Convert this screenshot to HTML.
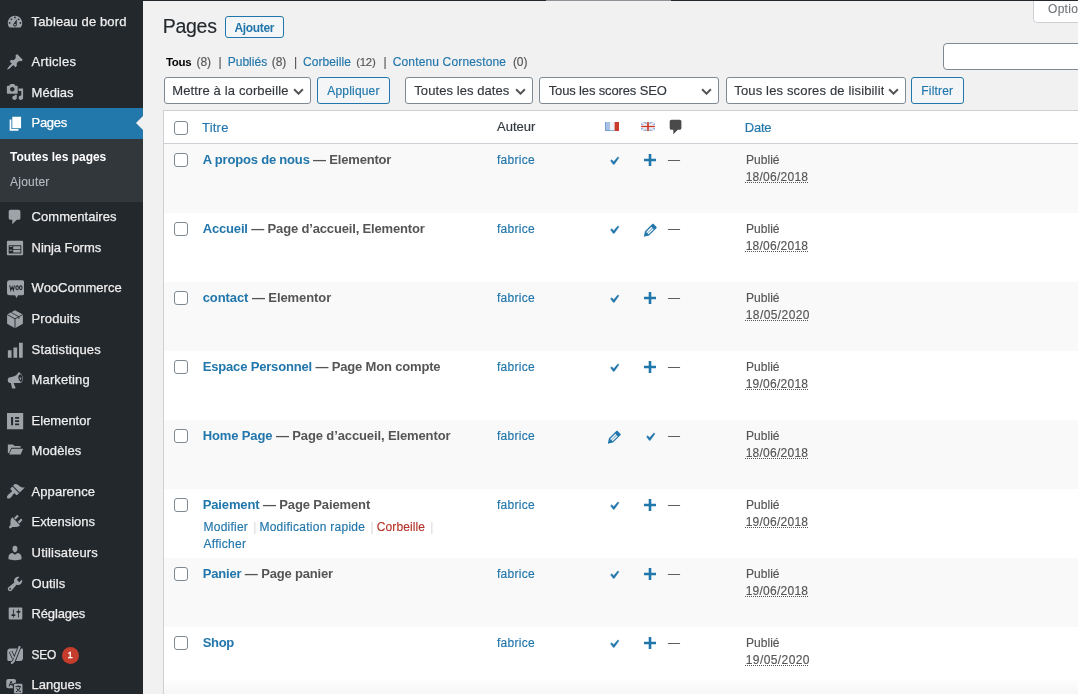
<!DOCTYPE html>
<html lang="fr">
<head>
<meta charset="utf-8">
<title>Pages</title>
<style>
*{box-sizing:border-box;margin:0;padding:0}
html,body{width:1078px;height:694px;overflow:hidden}
body{background:#f1f1f1;font-family:"Liberation Sans",Arial,sans-serif;font-size:12px;color:#444;position:relative}
a{text-decoration:none;color:#2176ab}
i{font-style:normal}
#wrap{position:absolute;left:0;top:0;width:1078px;height:694px;overflow:hidden;will-change:transform}
#topbar{position:absolute;left:0;top:0;width:1078px;height:1px;background:#23282d;z-index:5}
#topbar i{position:absolute;left:546px;top:0;width:125px;height:1px;background:#8f9397}
#fade{position:absolute;left:164px;top:678px;width:914px;height:16px;background:linear-gradient(rgba(0,0,0,0),rgba(0,0,0,.035))}
#side{position:absolute;left:0;top:0;width:143px;height:694px;background:#23282d}
#cur{position:absolute;left:0;top:108px;width:143px;height:31px;background:#2277ab}
#cur:after{content:"";position:absolute;right:0;top:8px;border:7.5px solid transparent;border-right-color:#f1f1f1;border-left-width:0}
#sub{position:absolute;left:0;top:139px;width:143px;height:63px;background:#32373c}
.t{position:absolute;white-space:nowrap;-webkit-text-stroke:.15px}
.m{color:#eee;font-size:13px;-webkit-text-stroke:.25px}
.mic{position:absolute;fill:#9ea3a8}
.badge{position:absolute;left:62px;top:647px;width:16.500px;height:16.500px;border-radius:9px;background:#c63d2d;color:#fff;font-size:9.500px;line-height:16px;text-align:center;-webkit-text-stroke:.3px}
.btn{position:absolute;border:1px solid #2176ab;border-radius:3px;background:#f3f5f6}
.sel{position:absolute;border:1px solid #7e8993;border-radius:3px;background:#fff;height:27px;top:77px}
.sel svg{position:absolute;right:6.500px;top:9.500px;width:11px;height:7.700px}
#tbl{position:absolute;left:163px;top:110px;width:930px;height:600px;background:#fff;border:1px solid #ccd0d4}
#thead{position:absolute;left:164px;top:143px;width:920px;height:1px;background:#ccd0d4}
.row{position:absolute;left:164px;width:920px;background:#f9f9f9}
.cb{position:absolute;left:174px;width:14px;height:14px;border:1px solid #7e8993;border-radius:3px;background:#fff}
.b{font-weight:700;-webkit-text-stroke:0}
.g{color:#555}
.ic{position:absolute;fill:#2176ab}
.dt{text-decoration:underline dotted #555;text-decoration-thickness:1px;text-underline-offset:.5px}
#opt{position:absolute;left:1033px;top:-4px;width:120px;height:27px;border:1px solid #ccd0d4;border-radius:0 0 4px 4px;background:#fff}
#search{position:absolute;left:943px;top:43px;width:200px;height:27px;border:1px solid #7e8993;border-radius:4px;background:#fff}
</style>
</head>
<body>

<div id="wrap">
<div id="side"><div id="cur"></div><div id="sub"></div></div>
<div id="topbar"><i></i></div>
<svg class="mic" style="left:6.2px;top:13.1px;width:18.0px;height:18.0px" viewBox="0 0 20 20"><path d="M3.76 16h12.48c1.1-1.37 1.76-3.11 1.76-5 0-4.42-3.58-8-8-8s-8 3.58-8 8c0 1.89.66 3.63 1.76 5zM10 4c.55 0 1 .45 1 1s-.45 1-1 1-1-.45-1-1 .45-1 1-1zM6 6c.55 0 1 .45 1 1s-.45 1-1 1-1-.45-1-1 .45-1 1-1zm8 0c.55 0 1 .45 1 1s-.45 1-1 1-1-.45-1-1 .45-1 1-1zm-5.37 5.55L12 7v6c0 1.1-.9 2-2 2s-2-.9-2-2c0-.57.24-1.08.63-1.45zM4 10c.55 0 1 .45 1 1s-.45 1-1 1-1-.45-1-1 .45-1 1-1zm12 0c.55 0 1 .45 1 1s-.45 1-1 1-1-.45-1-1 .45-1 1-1zm-5 3c0-.55-.45-1-1-1s-1 .45-1 1 .45 1 1 1 1-.45 1-1z"/></svg>
<span class="t m" style="left:31.6px;top:13.3px;font-size:13px;line-height:17px;letter-spacing:0.11px">Tableau de bord</span>
<svg class="mic" style="left:6px;top:53px;width:18.0px;height:18.0px" viewBox="0 0 20 20"><path d="M10.44 3.02l1.82-1.82 6.36 6.35-1.83 1.820c-1.050-.68-2.480-.57-3.410.36l-.75.75c-.92.93-1.040 2.350-.35 3.410l-1.830 1.820-2.410-2.410-2.800 2.790c-.42.42-3.380 2.710-3.800 2.290s1.860-3.390 2.280-3.810l2.790-2.790L4.100 9.360l1.830-1.820c1.050.69 2.480.57 3.400-.36l.75-.75c.93-.92 1.050-2.350.36-3.410z"/></svg>
<span class="t m" style="left:31.6px;top:52.8px;font-size:13px;line-height:17px;letter-spacing:0.25px">Articles</span>
<svg class="mic" style="left:6px;top:83px;width:18.0px;height:18.0px" viewBox="0 0 20 20"><path d="M13 11V4c0-.55-.45-1-1-1h-1.670L9 1H5L3.670 3H2c-.55 0-1 .45-1 1v7c0 .55.45 1 1 1h10c.55 0 1-.45 1-1zM7 4.500c1.380 0 2.500 1.120 2.500 2.500S8.380 9.500 7 9.500 4.500 8.380 4.500 7 5.620 4.500 7 4.500zM14 6h5v10.500c0 1.380-1.120 2.500-2.500 2.500S14 17.880 14 16.500s1.120-2.500 2.500-2.500c.17 0 .34.020.5.050V9h-3V6zm-4 8.050V13h2v3.500c0 1.380-1.120 2.500-2.500 2.500S7 17.880 7 16.500 8.120 14 9.500 14c.17 0 .34.020.5.050z"/></svg>
<span class="t m" style="left:31.6px;top:84.0px;font-size:13px;line-height:17px">Médias</span>
<svg class="mic" style="left:6.8px;top:114.8px;width:17.6px;height:17.6px;fill:#fff" viewBox="0 0 20 20"><path d="M6 15V2h10v13H6zm-1 1h8v2H3V5h2v11z"/></svg>
<span class="t m" style="left:31.6px;top:113.7px;font-size:13px;line-height:17px;letter-spacing:-0.31px;color:#fff">Pages</span>
<svg class="mic" style="left:5.8px;top:207.5px;width:18.0px;height:18.0px" viewBox="0 0 20 20"><path d="M5 2h9c1.100 0 2 .9 2 2v7c0 1.100-.9 2-2 2h-2l-5 5v-5H5c-1.100 0-2-.9-2-2V4c0-1.100.9-2 2-2z"/></svg>
<span class="t m" style="left:31.6px;top:208.0px;font-size:13px;line-height:17px;letter-spacing:0.03px">Commentaires</span>
<svg class="mic" style="left:6px;top:238.8px;width:18.0px;height:18.0px" viewBox="0 0 20 20"><path d="M2 2h16c.55 0 1 .45 1 1v14c0 .55-.45 1-1 1H2c-.55 0-1-.45-1-1V3c0-.55.45-1 1-1zm15 14V7H3v9h14zM4 8v1h3V8H4zm4 0v3h8V8H8zm-4 4v1h3v-1H4zm4 0v3h8v-3H8z"/></svg>
<span class="t m" style="left:31.6px;top:238.8px;font-size:13px;line-height:17px;letter-spacing:-0.05px">Ninja Forms</span>
<svg class="mic" style="left:6.8px;top:279.7px;width:17.5px;height:18.4px" viewBox="0 0 18 18.400"><path d="M2.500 0h13A2.500 2.500 0 0 1 18 2.500v10.500a2.500 2.500 0 0 1-2.500 2.500H11.300L9.900 18.300 8.200 15.500H2.500A2.500 2.500 0 0 1 0 13V2.500A2.500 2.500 0 0 1 2.500 0z"/><path d="M2.800 5.300l1.100 5 1.400-3.600 1.300 3.600 1-5" fill="none" stroke="#23282d" stroke-width="1.100"/><ellipse cx="10.400" cy="7.800" rx="1.300" ry="2" fill="none" stroke="#23282d" stroke-width="1.100"/><ellipse cx="14.200" cy="7.800" rx="1.300" ry="2" fill="none" stroke="#23282d" stroke-width="1.100"/></svg>
<span class="t m" style="left:31.6px;top:279.0px;font-size:13px;line-height:17px">WooCommerce</span>
<svg class="mic" style="left:6.2px;top:310px;width:18.0px;height:20.0px" viewBox="0 0 18 20"><path d="M9 .3l7.900 4.200v9.200L9 18.300 1.100 13.700V4.500z"/><path d="M1.100 4.500L9 8.800l7.900-4.300M9 8.800v9.500" fill="none" stroke="#23282d" stroke-width=".9"/><path d="M5 2.400l7.900 4.300v2.200" fill="none" stroke="#23282d" stroke-width=".8"/></svg>
<span class="t m" style="left:31.6px;top:309.7px;font-size:13px;line-height:17px;letter-spacing:0.11px">Produits</span>
<svg class="mic" style="left:6px;top:340.6px;width:18.6px;height:18.6px" viewBox="0 0 20 20"><path d="M18 18V2h-4v16h4zm-6 0V7H8v11h4zm-6 0v-8H2v8h4z"/></svg>
<span class="t m" style="left:31.6px;top:340.6px;font-size:13px;line-height:17px;letter-spacing:0.18px">Statistiques</span>
<svg class="mic" style="left:5.8px;top:370.5px;width:18.4px;height:18.4px" viewBox="0 0 20 20"><path fill-rule="evenodd" d="M18.150 5.940c.46 1.620.38 3.220-.02 4.480-.42 1.280-1.260 2.180-2.300 2.480-.16.060-.26.060-.4.060-.06.020-.12.020-.18.020-.06.020-.14.020-.22.020h-6.800l2.220 5.500c.2.140-.6.260-.14.340-.8.100-.24.160-.34.160H6.950c-.1 0-.26-.06-.34-.16-.08-.08-.16-.2-.14-.34L5.350 13H4.310c-.94 0-1.880-.68-2.220-1.860-.26-.96-.22-1.900.02-2.640.24-.78.760-1.340 1.380-1.500.12-.4.24-.4.360-.04l5.120-1.260c.56-.14 1.440-.64 2.320-1.420.88-.76 1.660-1.640 2.040-2.360.06-.2.2-.34.4-.44.4-.14.880.04 1.320.38.960.76 2.480 2.480 3.100 4.080zm-1.820 5.620c.62-.18 1.120-.76 1.400-1.560.3-.96.34-2.200-.02-3.500-.48-1.720-1.720-3-2.620-2.820-.64.180-1.120.76-1.400 1.560-.3.960-.34 2.200.02 3.500.48 1.720 1.720 2.960 2.620 2.820zm-.6-4.600c.3.100.6.500.7 1 .2.800 0 1.500-.4 1.700-.4.100-.9-.4-1.100-1.200-.2-.7-.1-1.400.3-1.600.1 0 .3 0 .5.100z"/></svg>
<span class="t m" style="left:31.6px;top:371.0px;font-size:13px;line-height:17px;letter-spacing:0.13px">Marketing</span>
<svg class="mic" style="left:5px;top:411.1px;width:20.2px;height:20.3px" viewBox="0 0 20 20"><path fill-rule="evenodd" d="M2 2h16v16H2V2zm4 4v8h2V6H6zm4 0v1.700h4V6h-4zm0 3.150v1.700h4v-1.700h-4zm0 3.150V14h4v-1.700h-4z"/></svg>
<span class="t m" style="left:31.6px;top:412.1px;font-size:13px;line-height:17px;letter-spacing:-0.01px">Elementor</span>
<svg class="mic" style="left:6.6px;top:441px;width:17.0px;height:17.0px" viewBox="0 0 20 20"><path d="M1 4h6l2 2h7v2H5l-2.500 6L1 14V4zm4.500 5H19l-3 7H2.500l3-7z"/></svg>
<span class="t m" style="left:31.6px;top:441.8px;font-size:13px;line-height:17px;letter-spacing:0.09px">Modèles</span>
<svg class="mic" style="left:5.6px;top:482.4px;width:19.0px;height:19.0px" viewBox="0 0 20 20"><path d="M14.480 11.060L7.410 3.990l1.500-1.500c.5-.56 2.300-.47 3.510.32 1.210.8 1.430 1.280 2.910 2.100 1.180.64 2.450 1.260 4.450.85zm-.71.71L6.700 4.700 4.930 6.470c-.39.39-.39 1.020 0 1.410l1.060 1.060c.39.39.39 1.030 0 1.420-.6.600-1.430 1.110-2.210 1.690-.35.260-.7.530-1.010.84C1.430 14.230.4 16.080 1.400 17.070c.99 1 2.840-.03 4.180-1.360.31-.31.58-.66.850-1.020.57-.78 1.080-1.610 1.690-2.210.39-.39 1.020-.39 1.410 0l1.060 1.060c.39.39 1.020.39 1.410 0z"/></svg>
<span class="t m" style="left:31.6px;top:482.8px;font-size:13px;line-height:17px;letter-spacing:0.06px">Apparence</span>
<svg class="mic" style="left:6.5px;top:512.5px;width:17.4px;height:17.4px" viewBox="0 0 20 20"><path d="M13.110 4.360L9.870 7.600 8 5.730l3.240-3.240c.35-.34 1.050-.2 1.560.32.520.51.660 1.210.31 1.550zm-8 1.770l.91-1.120 9.010 9.010-1.190.84c-.71.710-2.630 1.160-3.820 1.160H6.140L4.900 17.260c-.59.590-1.540.590-2.120 0-.59-.58-.59-1.530 0-2.120L4.020 13.900v-3.880c0-1.190.45-3.170 1.090-3.890zm7.260 3.970l3.240-3.240c.34-.35 1.040-.21 1.550.31.520.51.660 1.210.31 1.550l-3.240 3.250z"/></svg>
<span class="t m" style="left:31.6px;top:512.9px;font-size:13px;line-height:17px;letter-spacing:-0.02px">Extensions</span>
<svg class="mic" style="left:6px;top:544px;width:18.0px;height:18.0px" viewBox="0 0 20 20"><path d="M10 9.250c-2.270 0-2.730-3.440-2.730-3.440C7 4.020 7.820 2 9.970 2c2.160 0 2.980 2.020 2.710 3.810 0 0-.41 3.440-2.680 3.440zm0 2.570L12.720 10c2.390 0 4.520 2.330 4.520 4.530v2.490s-3.650 1.130-7.240 1.130c-3.650 0-7.240-1.130-7.240-1.130v-2.490c0-2.250 1.940-4.480 4.470-4.480z"/></svg>
<span class="t m" style="left:31.6px;top:543.6px;font-size:13px;line-height:17px;letter-spacing:0.18px">Utilisateurs</span>
<svg class="mic" style="left:6px;top:574.5px;width:18.0px;height:18.0px" viewBox="0 0 20 20"><path fill-rule="evenodd" d="M16.680 9.770c-1.340 1.340-3.300 1.670-4.950.99l-5.410 6.520c-.99.990-2.590.990-3.580 0s-.99-2.590 0-3.570l6.520-5.420c-.68-1.650-.35-3.610.99-4.950 1.280-1.280 3.120-1.620 4.720-1.060l-2.890 2.890 2.820 2.820 2.860-2.870c.53 1.580.18 3.390-1.080 4.650zM3.810 16.210c.4.390 1.040.390 1.430 0 .4-.4.400-1.040 0-1.430-.39-.4-1.030-.4-1.430 0-.39.390-.39 1.030 0 1.430z"/></svg>
<span class="t m" style="left:31.6px;top:575.0px;font-size:13px;line-height:17px;letter-spacing:0.08px">Outils</span>
<svg class="mic" style="left:7.2px;top:605px;width:17.0px;height:17.0px" viewBox="0 0 20 20"><path fill-rule="evenodd" d="M18 16V4c0-.55-.45-1-1-1H3c-.55 0-1 .45-1 1v12c0 .55.45 1 1 1h14c.55 0 1-.45 1-1zM8 11h1c.55 0 1 .45 1 1s-.45 1-1 1H8v1.500c0 .28-.22.500-.5.500s-.5-.22-.5-.5V13H6c-.55 0-1-.45-1-1s.45-1 1-1h1V5.500c0-.28.220-.5.500-.5s.5.220.5.500V11zm5-2h-1c-.55 0-1-.45-1-1s.45-1 1-1h1V5.500c0-.28.220-.5.500-.5s.5.220.5.500V7h1c.55 0 1 .45 1 1s-.45 1-1 1h-1v5.500c0 .28-.22.500-.5.500s-.5-.22-.5-.5V9z"/></svg>
<span class="t m" style="left:31.6px;top:604.7px;font-size:13px;line-height:17px;letter-spacing:-0.17px">Réglages</span>
<svg class="mic" style="left:5px;top:645px;width:20.0px;height:20.0px" viewBox="0 0 20 20"><path d="M5.300 3.500H17a1 1 0 0 1 1 1V13a3 3 0 0 1-3 3H3.800a1.500 1.500 0 0 1-1.500-1.500V6.500a3 3 0 0 1 3-3z"/><path d="M5.600 6.500L8.600 13M14.800 1.200L9.500 14.500Q8.500 17.800 6 18.300" fill="none" stroke="#23282d" stroke-width="3.600"/><path d="M5.600 6.500L8.600 13M14.800 1.200L9.500 14.500Q8.500 17.800 6 18.300" fill="none" stroke="#9ea3a8" stroke-width="2"/></svg>
<span class="t m" style="left:31.6px;top:646.7px;font-size:11.9px;line-height:17px;letter-spacing:-0.26px">SEO</span>
<svg class="mic" style="left:5px;top:677px;width:20.0px;height:18.0px" viewBox="0 0 20 18"><rect x="1.300" y="2" width="9.600" height="9.200" rx="1.800"/><rect x="8.400" y="6.200" width="9.600" height="10.800" rx="1.800" stroke="#23282d" stroke-width="1"/><path d="M4 9.400L6.100 4.200 8.200 9.400M4.800 7.600h2.600M10.500 9.600H16M13.200 8.200v1.400M10.900 15q3.600-1.500 4.400-5.200M11.600 11.200q1.400 2.800 4.400 3.800" fill="none" stroke="#23282d" stroke-width="1"/></svg>
<span class="t m" style="left:31.6px;top:675.7px;font-size:13px;line-height:17px;letter-spacing:-0.04px">Langues</span>
<span class="t b" style="left:10.1px;top:148.7px;font-size:12px;line-height:16px;letter-spacing:-0.02px;color:#fff">Toutes les pages</span>
<span class="t" style="left:10.1px;top:173.6px;font-size:12px;line-height:16px;letter-spacing:0.20px;color:#b4b9be">Ajouter</span>
<i class="badge">1</i>
<div id="opt"></div>
<span class="t" style="left:1048.0px;top:1.3px;font-size:12px;line-height:16px;letter-spacing:0.30px;color:#72777c">Options de l’écran</span>
<span class="t" style="left:162.8px;top:12.7px;font-size:19.5px;line-height:27px;letter-spacing:-0.29px;color:#23282d">Pages</span>
<div class="btn" style="left:225px;top:16px;width:59px;height:22px"></div>
<span class="t b" style="left:234.4px;top:20.0px;font-size:12px;line-height:16px;letter-spacing:-0.31px;color:#2176ab">Ajouter</span>
<span class="t b" style="left:165.9px;top:53.8px;font-size:11.5px;line-height:16px;letter-spacing:-0.29px;color:#000">Tous</span>
<span class="t g" style="left:196.5px;top:53.6px;font-size:12px;line-height:16px;letter-spacing:-0.07px">(8)</span>
<span class="t g" style="left:218.5px;top:53.6px;font-size:12px;line-height:16px">|</span>
<span class="t" style="left:227.7px;top:53.6px;font-size:12px;line-height:16px;letter-spacing:0.02px;color:#2176ab">Publiés</span>
<span class="t g" style="left:271.7px;top:53.6px;font-size:12px;line-height:16px;letter-spacing:-0.03px">(8)</span>
<span class="t g" style="left:293.9px;top:53.6px;font-size:12px;line-height:16px">|</span>
<span class="t" style="left:302.9px;top:53.6px;font-size:12px;line-height:16px;letter-spacing:0.09px;color:#2176ab">Corbeille</span>
<span class="t g" style="left:356.3px;top:53.8px;font-size:11.4px;line-height:16px;letter-spacing:-0.28px">(12)</span>
<span class="t g" style="left:383.5px;top:53.6px;font-size:12px;line-height:16px">|</span>
<span class="t" style="left:392.7px;top:53.6px;font-size:12px;line-height:16px;letter-spacing:0.15px;color:#2176ab">Contenu Cornestone</span>
<span class="t g" style="left:512.9px;top:53.6px;font-size:12px;line-height:16px;letter-spacing:-0.07px">(0)</span>
<div id="search"></div>
<div class="sel" style="left:164px;width:147px"><svg viewBox="0 0 10 7"><path d="M1 1.200l4 4 4-4" fill="none" stroke="#555" stroke-width="1.800"/></svg></div>
<span class="t" style="left:172.2px;top:82.2px;font-size:13px;line-height:17px;letter-spacing:0.14px;color:#32373c">Mettre à la corbeille</span>
<div class="btn" style="left:317px;top:77px;width:73px;height:27px"></div>
<span class="t" style="left:327.3px;top:83.0px;font-size:12px;line-height:16px;letter-spacing:0.18px;color:#2176ab">Appliquer</span>
<div class="sel" style="left:405px;width:128px"><svg viewBox="0 0 10 7"><path d="M1 1.200l4 4 4-4" fill="none" stroke="#555" stroke-width="1.800"/></svg></div>
<span class="t" style="left:414.3px;top:82.2px;font-size:13px;line-height:17px;letter-spacing:0.07px;color:#32373c">Toutes les dates</span>
<div class="sel" style="left:539px;width:180px"><svg viewBox="0 0 10 7"><path d="M1 1.200l4 4 4-4" fill="none" stroke="#555" stroke-width="1.800"/></svg></div>
<span class="t" style="left:548.7px;top:82.2px;font-size:13px;line-height:17px;letter-spacing:-0.14px;color:#32373c">Tous les scores SEO</span>
<div class="sel" style="left:726px;width:180px"><svg viewBox="0 0 10 7"><path d="M1 1.200l4 4 4-4" fill="none" stroke="#555" stroke-width="1.800"/></svg></div>
<div style="position:absolute;left:0;top:70px;width:883.500px;height:40px;overflow:hidden"><span class="t" style="left:734.3px;top:12.2px;font-size:13px;line-height:17px;letter-spacing:0.15px;color:#32373c">Tous les scores de lisibilité</span></div>
<div class="btn" style="left:911px;top:77px;width:53px;height:27px"></div>
<span class="t" style="left:921.3px;top:83.0px;font-size:12px;line-height:16px;letter-spacing:0.19px;color:#2176ab">Filtrer</span>
<div id="tbl"></div><div id="thead"></div>
<i class="cb" style="top:121px"></i>
<span class="t" style="left:202.0px;top:118.6px;font-size:13px;line-height:17px;letter-spacing:0.22px;color:#2176ab">Titre</span>
<span class="t" style="left:497.0px;top:117.6px;font-size:13px;line-height:17px;letter-spacing:0.03px;color:#32373c">Auteur</span>
<svg style="position:absolute;left:605px;top:122px" width="14" height="9" viewBox="0 0 14 9"><rect width="14" height="9" fill="#eef1f6"/><rect width="5" height="9" fill="#a9c1e2"/><path d="M.350 0v8.650H9.500" fill="none" stroke="#4d88c9" stroke-width=".7"/><rect x="9.600" width="4.400" height="9" fill="#c93a2c"/></svg>
<svg style="position:absolute;left:641px;top:122px" width="14" height="9" viewBox="0 0 14 9"><rect width="14" height="9" fill="#9fb2d8"/><path d="M0 0l14 9M14 0L0 9" stroke="#eef0f6" stroke-width="1.800"/><path d="M7 0v9M0 4.500h14" stroke="#f4f4f8" stroke-width="3"/><path d="M7 0v9" stroke="#c93a2c" stroke-width="1.700"/><path d="M0 4.500h14" stroke="#c93a2c" stroke-width="1.300"/></svg>
<svg style="position:absolute;left:667px;top:118px;fill:#4a4a4a" width="18" height="18" viewBox="0 0 20 20"><path d="M5 2h9c1.100 0 2 .9 2 2v7c0 1.100-.9 2-2 2h-2l-5 5v-5H5c-1.100 0-2-.9-2-2V4c0-1.100.9-2 2-2z"/></svg>
<span class="t" style="left:744.8px;top:118.6px;font-size:13px;line-height:17px;letter-spacing:-0.22px;color:#2176ab">Date</span>
<div class="row" style="top:144px;height:69px"></div>
<i class="cb" style="top:153.0px"></i>
<span class="t b g" style="left:202.7px;top:150.8px;font-size:13px;line-height:17px;letter-spacing:-0.19px"><a>A propos de nous</a> — Elementor</span>
<span class="t" style="left:497.0px;top:151.6px;font-size:12px;line-height:16px;letter-spacing:0.27px;color:#2176ab">fabrice</span>
<svg class="ic" style="left:605.7px;top:152.9px;width:16px;height:16px;stroke:#2176ab;stroke-width:.6" viewBox="0 0 20 20"><path d="M14.830 4.890l1.340.94-5.810 8.380H9.020L5.780 9.670l1.340-1.250 2.570 2.400z"/></svg>
<svg class="ic" style="left:644.1px;top:153.9px;width:12px;height:12px" viewBox="0 0 12 12"><path d="M4.700 0h2.600v4.700H12v2.600H7.300V12H4.700V7.300H0V4.700h4.700z"/></svg>
<span class="t g" style="left:668.0px;top:151.6px;font-size:12px;line-height:16px">—</span>
<span class="t g" style="left:745.9px;top:151.6px;font-size:12px;line-height:16px;letter-spacing:0.06px">Publié</span>
<span class="t g dt" style="left:745.7px;top:168.8px;font-size:12px;line-height:16px;letter-spacing:0.25px">18/06/2018</span>
<i class="cb" style="top:222.1px"></i>
<span class="t b g" style="left:202.7px;top:219.9px;font-size:13px;line-height:17px;letter-spacing:-0.16px"><a>Accueil</a> — Page d’accueil, Elementor</span>
<span class="t" style="left:497.0px;top:220.7px;font-size:12px;line-height:16px;letter-spacing:0.27px;color:#2176ab">fabrice</span>
<svg class="ic" style="left:605.7px;top:222.0px;width:16px;height:16px;stroke:#2176ab;stroke-width:.6" viewBox="0 0 20 20"><path d="M14.830 4.890l1.340.94-5.810 8.380H9.020L5.780 9.670l1.340-1.250 2.570 2.400z"/></svg>
<svg class="ic" style="left:640.5px;top:220.8px;width:18.500px;height:18.500px" viewBox="0 0 20 20"><path fill-rule="evenodd" d="M13.890 3.390l2.710 2.720c.46.46.42 1.240.03 1.640l-8.010 8.020-5.560 1.160 1.160-5.580s7.600-7.630 7.990-8.030c.39-.39 1.220-.39 1.680.07zm-2.730 2.790l-5.590 5.610 1.110 1.110 5.540-5.650zm-2.970 8.230l5.580-5.600-1.070-1.080-5.590 5.600z"/></svg>
<span class="t g" style="left:668.0px;top:220.7px;font-size:12px;line-height:16px">—</span>
<span class="t g" style="left:745.9px;top:220.7px;font-size:12px;line-height:16px;letter-spacing:0.06px">Publié</span>
<span class="t g dt" style="left:745.7px;top:237.9px;font-size:12px;line-height:16px;letter-spacing:0.25px">18/06/2018</span>
<div class="row" style="top:282px;height:69px"></div>
<i class="cb" style="top:291.1px"></i>
<span class="t b g" style="left:202.7px;top:288.9px;font-size:13px;line-height:17px;letter-spacing:-0.08px"><a>contact</a> — Elementor</span>
<span class="t" style="left:497.0px;top:289.8px;font-size:12px;line-height:16px;letter-spacing:0.27px;color:#2176ab">fabrice</span>
<svg class="ic" style="left:605.7px;top:291.0px;width:16px;height:16px;stroke:#2176ab;stroke-width:.6" viewBox="0 0 20 20"><path d="M14.830 4.890l1.340.94-5.810 8.380H9.020L5.780 9.670l1.340-1.250 2.570 2.400z"/></svg>
<svg class="ic" style="left:644.1px;top:292.0px;width:12px;height:12px" viewBox="0 0 12 12"><path d="M4.700 0h2.600v4.700H12v2.600H7.300V12H4.700V7.300H0V4.700h4.700z"/></svg>
<span class="t g" style="left:668.0px;top:289.8px;font-size:12px;line-height:16px">—</span>
<span class="t g" style="left:745.9px;top:289.8px;font-size:12px;line-height:16px;letter-spacing:0.06px">Publié</span>
<span class="t g dt" style="left:745.7px;top:307.0px;font-size:12px;line-height:16px;letter-spacing:0.42px">18/05/2020</span>
<i class="cb" style="top:360.2px"></i>
<span class="t b g" style="left:202.7px;top:358.0px;font-size:13px;line-height:17px;letter-spacing:-0.17px"><a>Espace Personnel</a> — Page Mon compte</span>
<span class="t" style="left:497.0px;top:358.8px;font-size:12px;line-height:16px;letter-spacing:0.27px;color:#2176ab">fabrice</span>
<svg class="ic" style="left:605.7px;top:360.1px;width:16px;height:16px;stroke:#2176ab;stroke-width:.6" viewBox="0 0 20 20"><path d="M14.830 4.890l1.340.94-5.810 8.380H9.020L5.780 9.670l1.340-1.250 2.570 2.400z"/></svg>
<svg class="ic" style="left:644.1px;top:361.1px;width:12px;height:12px" viewBox="0 0 12 12"><path d="M4.700 0h2.600v4.700H12v2.600H7.300V12H4.700V7.300H0V4.700h4.700z"/></svg>
<span class="t g" style="left:668.0px;top:358.8px;font-size:12px;line-height:16px">—</span>
<span class="t g" style="left:745.9px;top:358.8px;font-size:12px;line-height:16px;letter-spacing:0.06px">Publié</span>
<span class="t g dt" style="left:745.7px;top:376.0px;font-size:12px;line-height:16px;letter-spacing:0.25px">19/06/2018</span>
<div class="row" style="top:420px;height:69px"></div>
<i class="cb" style="top:429.2px"></i>
<span class="t b g" style="left:202.7px;top:427.0px;font-size:13px;line-height:17px;letter-spacing:-0.12px"><a>Home Page</a> — Page d’accueil, Elementor</span>
<span class="t" style="left:497.0px;top:427.9px;font-size:12px;line-height:16px;letter-spacing:0.27px;color:#2176ab">fabrice</span>
<svg class="ic" style="left:604.5px;top:427.9px;width:18.500px;height:18.500px" viewBox="0 0 20 20"><path fill-rule="evenodd" d="M13.890 3.390l2.710 2.720c.46.46.42 1.240.03 1.640l-8.010 8.020-5.560 1.160 1.160-5.580s7.600-7.630 7.990-8.030c.39-.39 1.220-.39 1.680.07zm-2.730 2.790l-5.590 5.610 1.110 1.110 5.540-5.650zm-2.970 8.230l5.580-5.600-1.070-1.080-5.590 5.600z"/></svg>
<svg class="ic" style="left:641.7px;top:429.1px;width:16px;height:16px;stroke:#2176ab;stroke-width:.6" viewBox="0 0 20 20"><path d="M14.830 4.890l1.340.94-5.810 8.380H9.020L5.780 9.670l1.340-1.250 2.570 2.400z"/></svg>
<span class="t g" style="left:668.0px;top:427.9px;font-size:12px;line-height:16px">—</span>
<span class="t g" style="left:745.9px;top:427.9px;font-size:12px;line-height:16px;letter-spacing:0.06px">Publié</span>
<span class="t g dt" style="left:745.7px;top:445.1px;font-size:12px;line-height:16px;letter-spacing:0.25px">18/06/2018</span>
<i class="cb" style="top:498.3px"></i>
<span class="t b g" style="left:202.7px;top:496.1px;font-size:13px;line-height:17px;letter-spacing:-0.13px"><a>Paiement</a> — Page Paiement</span>
<span class="t" style="left:497.0px;top:496.9px;font-size:12px;line-height:16px;letter-spacing:0.27px;color:#2176ab">fabrice</span>
<svg class="ic" style="left:605.7px;top:498.2px;width:16px;height:16px;stroke:#2176ab;stroke-width:.6" viewBox="0 0 20 20"><path d="M14.830 4.890l1.340.94-5.810 8.380H9.020L5.780 9.670l1.340-1.250 2.570 2.400z"/></svg>
<svg class="ic" style="left:644.1px;top:499.2px;width:12px;height:12px" viewBox="0 0 12 12"><path d="M4.700 0h2.600v4.700H12v2.600H7.300V12H4.700V7.300H0V4.700h4.700z"/></svg>
<span class="t g" style="left:668.0px;top:496.9px;font-size:12px;line-height:16px">—</span>
<span class="t g" style="left:745.9px;top:496.9px;font-size:12px;line-height:16px;letter-spacing:0.06px">Publié</span>
<span class="t g dt" style="left:745.7px;top:514.1px;font-size:12px;line-height:16px;letter-spacing:0.25px">19/06/2018</span>
<span class="t" style="left:203.6px;top:518.8px;font-size:12px;line-height:16px;letter-spacing:0.22px;color:#2176ab">Modifier</span>
<span class="t" style="left:253.3px;top:518.8px;font-size:12px;line-height:16px;color:#ddd">|</span>
<span class="t" style="left:259.4px;top:518.8px;font-size:12px;line-height:16px;letter-spacing:0.27px;color:#2176ab">Modification rapide</span>
<span class="t" style="left:370.5px;top:518.8px;font-size:12px;line-height:16px;color:#ddd">|</span>
<span class="t" style="left:376.7px;top:518.8px;font-size:12px;line-height:16px;letter-spacing:0.12px;color:#b5342b">Corbeille</span>
<span class="t" style="left:430.2px;top:518.8px;font-size:12px;line-height:16px;color:#ddd">|</span>
<span class="t" style="left:203.6px;top:535.5px;font-size:12px;line-height:16px;letter-spacing:0.27px;color:#2176ab">Afficher</span>
<div class="row" style="top:558px;height:69px"></div>
<i class="cb" style="top:567.4px"></i>
<span class="t b g" style="left:202.7px;top:565.2px;font-size:13px;line-height:17px;letter-spacing:-0.17px"><a>Panier</a> — Page panier</span>
<span class="t" style="left:497.0px;top:566.0px;font-size:12px;line-height:16px;letter-spacing:0.27px;color:#2176ab">fabrice</span>
<svg class="ic" style="left:605.7px;top:567.3px;width:16px;height:16px;stroke:#2176ab;stroke-width:.6" viewBox="0 0 20 20"><path d="M14.830 4.890l1.340.94-5.810 8.380H9.020L5.780 9.670l1.340-1.250 2.570 2.400z"/></svg>
<svg class="ic" style="left:644.1px;top:568.3px;width:12px;height:12px" viewBox="0 0 12 12"><path d="M4.700 0h2.600v4.700H12v2.600H7.300V12H4.700V7.300H0V4.700h4.700z"/></svg>
<span class="t g" style="left:668.0px;top:566.0px;font-size:12px;line-height:16px">—</span>
<span class="t g" style="left:745.9px;top:566.0px;font-size:12px;line-height:16px;letter-spacing:0.06px">Publié</span>
<span class="t g dt" style="left:745.7px;top:583.2px;font-size:12px;line-height:16px;letter-spacing:0.25px">19/06/2018</span>
<i class="cb" style="top:636.4px"></i>
<span class="t b g" style="left:202.7px;top:634.2px;font-size:13px;line-height:17px;letter-spacing:-0.31px"><a>Shop</a></span>
<span class="t" style="left:497.0px;top:635.1px;font-size:12px;line-height:16px;letter-spacing:0.27px;color:#2176ab">fabrice</span>
<svg class="ic" style="left:605.7px;top:636.3px;width:16px;height:16px;stroke:#2176ab;stroke-width:.6" viewBox="0 0 20 20"><path d="M14.830 4.890l1.340.94-5.810 8.380H9.020L5.780 9.670l1.340-1.250 2.570 2.400z"/></svg>
<svg class="ic" style="left:644.1px;top:637.3px;width:12px;height:12px" viewBox="0 0 12 12"><path d="M4.700 0h2.600v4.700H12v2.600H7.300V12H4.700V7.300H0V4.700h4.700z"/></svg>
<span class="t g" style="left:668.0px;top:635.1px;font-size:12px;line-height:16px">—</span>
<span class="t g" style="left:745.9px;top:635.1px;font-size:12px;line-height:16px;letter-spacing:0.06px">Publié</span>
<span class="t g dt" style="left:745.7px;top:652.3px;font-size:12px;line-height:16px;letter-spacing:0.42px">19/05/2020</span>
<div id="fade"></div>
</div>
</body>
</html>
